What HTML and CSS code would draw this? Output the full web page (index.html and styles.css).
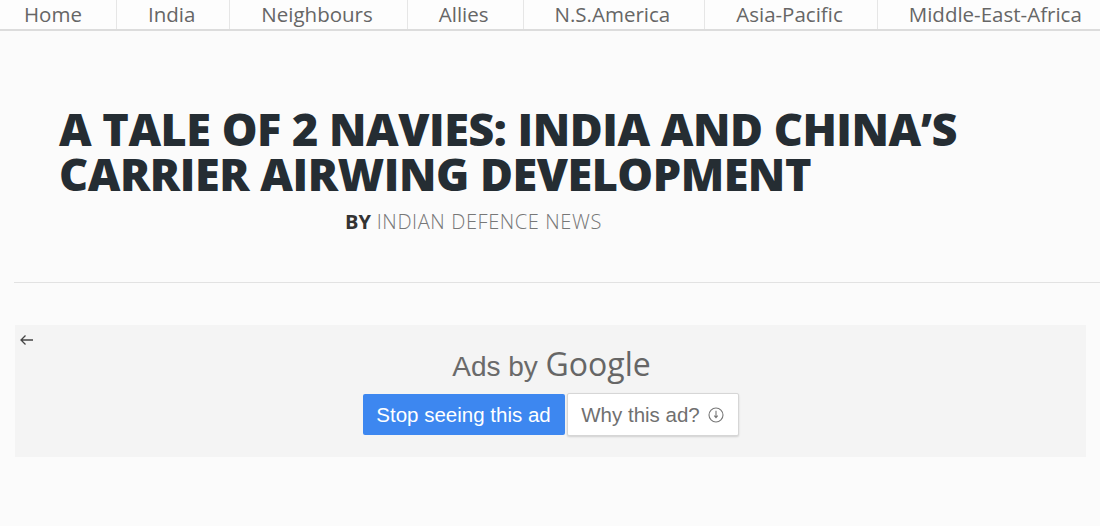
FILE: index.html
```html
<!DOCTYPE html>
<html lang="en">
<head>
    <meta charset="UTF-8">
    <meta name="viewport" content="width=device-width, initial-scale=1.0">
    <title>A Tale of 2 Navies</title>
    <link rel="stylesheet" href="styles.css">
</head>
<body>
    <!-- Top menu -->
    <nav class="menu">
        <a class="menu-item first" href="#">Home</a>
        <a class="menu-item" href="#">India</a>
        <a class="menu-item" href="#">Neighbours</a>
        <a class="menu-item" href="#">Allies</a>
        <a class="menu-item" href="#">N.S.America</a>
        <a class="menu-item" href="#">Asia-Pacific</a>
        <a class="menu-item last" href="#">Middle-East-Africa</a>
    </nav>

    <!-- Post header -->
    <header class="post-header">
        <h1 class="post-title">A TALE OF 2 NAVIES: INDIA AND CHINA’S CARRIER AIRWING DEVELOPMENT</h1>
        <p class="byline"><b>BY</b> INDIAN DEFENCE NEWS</p>
    </header>

    <hr class="divider">

    <!-- Ad slot -->
    <div class="ad-box">
        <span class="ad-back">
            <svg width="15" height="12" viewBox="0 0 15 12">
                <path d="M14 6H2M6.5 1.5L2 6l4.5 4.5" fill="none" stroke="#444" stroke-width="1.3"/>
            </svg>
        </span>
        <div class="ad-label">Ads by <span class="ad-google">Google</span></div>
        <div class="ad-buttons">
            <button class="stop-btn">Stop seeing this ad</button>
            <button class="why-btn">Why this ad?
                <svg width="16" height="16" viewBox="0 0 16 16">
                    <circle cx="8" cy="8" r="7" fill="none" stroke="#777" stroke-width="1.1"/>
                    <path d="M8 3.8v6.4M6.3 8.6L8 10.6l1.7-2" fill="none" stroke="#777" stroke-width="1.1"/>
                </svg>
            </button>
        </div>
    </div>
</body>
</html>
```

FILE: styles.css
```css
/* General styling */
body {
    margin: 0;
    padding: 0;
    background-color: #fbfbfb;
    font-family: "Open Sans", Arial, sans-serif;
    overflow: hidden;
}

/* Top menu */
.menu {
    display: flex;
    height: 32px;
    border-bottom: 2px solid #dcdcdc;
    margin-top: -3px;
    background-color: #fdfdfd;
}

.menu-item {
    display: flex;
    align-items: center;
    padding: 2px 34px 0 31px;
    font-size: 20.5px;
    color: #666;
    text-decoration: none;
    border-right: 1px solid #e6e6e6;
    white-space: nowrap;
}

.menu-item.first {
    padding-left: 24px;
}

.menu-item.last {
    border-right: none;
}

/* Post header */
.post-header {
    padding: 75px 0 0 59px;
}

.post-title {
    margin: 0;
    width: 960px;
    font-size: 45px;
    line-height: 45px;
    font-weight: 800;
    color: #252d33;
    letter-spacing: -0.5px;
}

.byline {
    margin: 12px 0 0 286px;
    font-size: 20px;
    letter-spacing: 0.6px;
    color: #777;
    font-weight: 300;
}

.byline b {
    color: #333;
    font-weight: 700;
    letter-spacing: 0;
}

.divider {
    margin: 47px 0 0 14px;
    border: none;
    border-top: 1px solid #e2e2e2;
}

/* Ad slot */
.ad-box {
    position: relative;
    margin: 42px 14px 0 15px;
    height: 132px;
    background-color: #f4f4f4;
    display: flex;
    flex-direction: column;
    align-items: center;
}

.ad-back {
    position: absolute;
    left: 4px;
    top: 4px;
}

.ad-label {
    margin-top: 17px;
    margin-left: 2px;
    font-family: Arial, sans-serif;
    font-size: 28px;
    color: #6a6a6a;
}

.ad-google {
    font-family: "Open Sans", Arial, sans-serif;
    font-size: 32px;
    color: #666;
}

.ad-buttons {
    display: flex;
    align-items: center;
    gap: 2px;
    margin-top: 8px;
}

.stop-btn, .why-btn {
    font-family: Arial, sans-serif;
    font-size: 20.5px;
    border-radius: 2px;
    cursor: pointer;
}

.stop-btn {
    height: 41px;
    width: 202px;
    padding: 0;
    color: #ffffff;
    background-color: #3d87f0;
    border: none;
}

.why-btn {
    height: 43px;
    width: 172px;
    padding: 0;
    color: #707070;
    background-color: #ffffff;
    border: 1px solid #d6d6d6;
    box-shadow: 0 1px 2px rgba(0, 0, 0, 0.15);
    display: flex;
    align-items: center;
    justify-content: center;
    gap: 8px;
}
```
